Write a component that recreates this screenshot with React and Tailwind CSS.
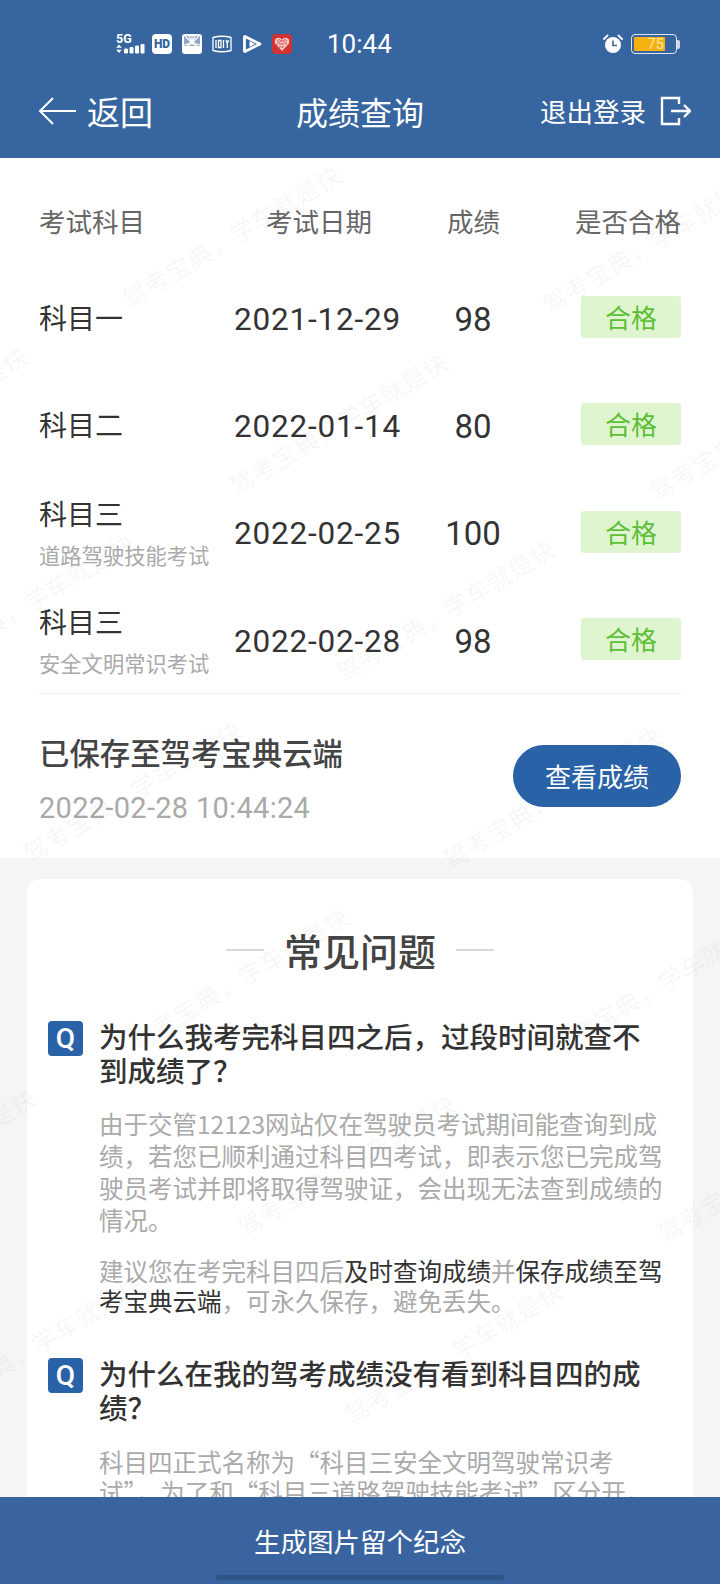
const CJK = '"Noto Sans CJK SC","Noto Sans",sans-serif';

function Watermarks() {
  const marks = [];
  for (let i = -2; i <= 2; i++) {
    for (let j = -2; j <= 8; j++) {
      const x = 132 + i * 420 + j * 107;
      const y = 313 + i * 6 + j * 187 - 158;
      if (x > 740 || x < -260 || y < 0 || y > 1400) continue;
      marks.push([x, y]);
    }
  }
  return (
    <div className="absolute inset-0 z-10 pointer-events-none overflow-hidden">
      {marks.map(([x, y]) => (
        <span
          key={`${x}-${y}`}
          className="absolute whitespace-nowrap text-[24px] leading-[30px] tracking-[1px] text-black/[0.05] origin-bottom-left"
          style={{ left: x, top: y - 30, transform: 'rotate(-31deg)' }}
        >
          驾考宝典，学车就是快
        </span>
      ))}
    </div>
  );
}

function StatusBar() {
  return (
    <div className="h-[88px] flex items-start pt-[33px] pl-[116px] pr-[40px] text-white">
      <div className="w-[32px] h-[22px] mr-[4px] flex flex-col">
        <span className="block h-[11px] text-[12.500px] leading-[11px] font-bold" style={{ fontFamily: 'Roboto' }}>5G</span>
        <svg width="32" height="11" viewBox="0 11 32 11" fill="#fff" className="block">
          <path d="M3 11.500l2.800 3.200h-5.600zM3 20l2.800-3.200h-5.600z" />
          <rect x="8" y="15.500" width="4" height="5" rx="1.200" />
          <rect x="13.500" y="14" width="4" height="6.500" rx="1.200" />
          <rect x="19" y="12.500" width="4" height="8" rx="1.200" />
          <rect x="24.500" y="11" width="4" height="9.500" rx="1.200" />
        </svg>
      </div>
      <div className="w-[20px] h-[20px] rounded-[4px] bg-white flex items-center justify-center text-[12px] font-black text-[#36659f] mr-[10px] mt-[1px]" style={{ fontFamily: 'Roboto' }}>HD</div>
      <svg width="20" height="20" viewBox="0 0 20 20" className="mr-[10px] mt-[1px]">
        <rect width="20" height="20" rx="3" fill="#fff" />
        <path d="M2 2h16v10H2z" fill="#8fa8c8" />
        <path d="M10 9L3 2M10 9L7 2M10 9V2M10 9l3-7M10 9l7-7M10 9l-8 2M10 9l8 2M10 9l-5 3M10 9l5 3" stroke="#fff" strokeWidth="1.200" />
        <circle cx="10" cy="8" r="2.500" fill="#fff" />
      </svg>
      <svg width="20" height="20" viewBox="0 0 20 20" className="mr-[10px] mt-[1px]">
        <path d="M1 3.500Q10 1 19 3.500V16.500Q10 19 1 16.500Z" fill="none" stroke="#fff" strokeWidth="1.300" />
        <path d="M4 6v8M6.500 6.500h2.500v7H6.500zM11.500 6v8M14 6l1.300 3.500L16.600 6M15.300 9.500V14" fill="none" stroke="#fff" strokeWidth="1.300" />
      </svg>
      <svg width="20" height="20" viewBox="0 0 20 20" className="mr-[10px] mt-[1px]">
        <path d="M3 2.500L18 10 3 17.500" fill="none" stroke="#fff" strokeWidth="2.800" strokeLinejoin="round" strokeLinecap="round" />
        <path d="M2.500 3v14" stroke="#fff" strokeWidth="2.800" strokeLinecap="round" />
        <path d="M7.500 7L13 10 7.500 13Z" fill="#fff" />
      </svg>
      <svg width="20" height="20" viewBox="0 0 20 20" className="mt-[1px]">
        <rect width="20" height="20" rx="4" fill="#cf3333" />
        <path d="M10 17L3 9.500Q1.800 4 6.500 3.800 9 3.800 10 5.800 11 3.800 13.500 3.800 18.200 4 17 9.500Z" fill="#f6c9c9" />
        <path d="M5 7h10M4.500 10h11M7 13h6M7 5v6M10 6v9M13 5v6" stroke="#cf3333" strokeWidth="1" strokeDasharray="1.500 1.500" />
      </svg>
      <span className="ml-[35px] text-[26px] leading-[22px]" style={{ fontFamily: 'Roboto' }}>10:44</span>
      <svg width="20" height="20" viewBox="0 0 20 20" className="ml-auto mt-[1px]">
        <circle cx="10" cy="11" r="8" fill="#fff" />
        <path d="M10 6.500V11.500H14" fill="none" stroke="#36659f" strokeWidth="1.600" />
        <path d="M1 5l3.500-3.500M19 5l-3.500-3.500" stroke="#fff" strokeWidth="1.800" strokeLinecap="round" />
      </svg>
      <div className="ml-[8px] mt-[1px] flex items-center">
        <div className="w-[46px] h-[20px] rounded-[4px] border border-[#dfe6ee] p-[2px]">
          <div className="w-[31px] h-full bg-[#f6b10e] rounded-l-[1px] text-[15px] leading-[14px] text-right text-[#fbe7a8] pr-[1px]" style={{ fontFamily: 'Roboto' }}>75</div>
        </div>
        <div className="w-[3px] h-[9px] bg-[#cfd8e3] rounded-r-[2px]" />
      </div>
    </div>
  );
}

function NavBar() {
  return (
    <div className="h-[70px] flex items-center text-white pb-[24px]">
      <div className="flex items-center pl-[38px]">
        <svg width="39" height="30" viewBox="0 0 39 30" fill="none" stroke="#fff" strokeWidth="2">
          <path d="M38 15H2M15 2L2 15l13 13" />
        </svg>
        <span className="ml-[10px] text-[33px] leading-[40px]">返回</span>
      </div>
      <span className="ml-[143px] text-[32px] leading-[40px]">成绩查询</span>
      <div className="ml-auto flex items-center pr-[29px]">
        <span className="text-[26.500px] leading-[36px]">退出登录</span>
        <svg width="31" height="30" viewBox="0 0 31 30" fill="none" stroke="#fff" strokeWidth="2.400" className="ml-[14px]">
          <path d="M19 8V2H2v26h17v-6M11 15h18M24 9l6 6-6 6" />
        </svg>
      </div>
    </div>
  );
}

function Badge() {
  return (
    <div className="w-[100px] h-[42px] rounded-[3px] bg-[#dff5d0] text-[#5cbf35] text-[26px] leading-[42px] text-center justify-self-end">
      合格
    </div>
  );
}

const rows = [
  { name: '科目一', date: '2021-12-29', score: '98' },
  { name: '科目二', date: '2022-01-14', score: '80' },
  { name: '科目三', sub: '道路驾驶技能考试', date: '2022-02-25', score: '100' },
  { name: '科目三', sub: '安全文明常识考试', date: '2022-02-28', score: '98' },
];

function ScoreTable() {
  return (
    <div>
      <div className="grid grid-cols-[195px_205px_79px_1fr] h-[105.500px] pt-[20px] items-center text-[26.500px] text-[#666]">
        <span>考试科目</span>
        <span className="pl-[32px]">考试日期</span>
        <span className="ml-[8px] whitespace-nowrap">成绩</span>
        <span className="text-right whitespace-nowrap">是否合格</span>
      </div>
      {rows.map((r, i) => (
        <div key={i} className="grid grid-cols-[195px_205px_79px_1fr] h-[107.300px] items-center">
          <div className="flex flex-col">
            <span className="text-[28px] leading-[36px] text-[#333]">{r.name}</span>
            {r.sub && <span className="text-[21.300px] leading-[30px] mt-[9px] mb-[-2px] text-[#aaa] whitespace-nowrap">{r.sub}</span>}
          </div>
          <span className="text-[31.500px] tracking-[0.800px] leading-[36px] text-[#333] whitespace-nowrap mt-[5px]" style={{ fontFamily: 'Roboto' }}>{r.date}</span>
          <span className="w-[60px] text-center text-[33px] leading-[36px] text-[#333] mt-[5px] ml-[4px]" style={{ fontFamily: 'Roboto' }}>{r.score}</span>
          <Badge />
        </div>
      ))}
    </div>
  );
}

function Question({ children }) {
  return (
    <div className="flex">
      <div className="w-[35px] h-[35px] shrink-0 rounded-[4px] bg-[#2a62a8] text-white text-[28px] font-medium leading-[36px] text-center" style={{ fontFamily: 'Roboto' }}>Q</div>
      <p className="ml-[16px] text-[28.500px] leading-[33.500px] font-medium text-[#333] mt-[-2px] w-[560px]">{children}</p>
    </div>
  );
}

export default function App() {
  return (
    <div className="w-[720px] h-[1584px] flex flex-col overflow-hidden bg-[#f5f5f5]" style={{ fontFamily: CJK }}>
      <header className="h-[158px] shrink-0 bg-[#36659f]">
        <StatusBar />
        <NavBar />
      </header>

      <main className="relative flex-1 min-h-0 overflow-hidden">
        <Watermarks />
        <section className="bg-white px-[39px] h-[700px]">
          <ScoreTable />
          <div className="border-t border-[#f3f3f3] flex items-center justify-between h-[165px]">
            <div className="mt-[8px]">
              <div className="text-[30.400px] leading-[36px] font-medium text-[#444] whitespace-nowrap">已保存至驾考宝典云端</div>
              <div className="text-[29px] tracking-[0.300px] leading-[36px] text-[#aaa] mt-[20px]" style={{ fontFamily: 'Roboto' }}>2022-02-28 10:44:24</div>
            </div>
            <button className="w-[168px] h-[62px] rounded-full bg-[#2a62a8] text-white text-[26px] leading-[62px]">查看成绩</button>
          </div>
        </section>

        <section className="mx-[27px] mt-[21px] rounded-t-[14px] bg-white px-[21px] pt-[46px]">
          <div className="flex items-center justify-center gap-[20px] h-[50px]">
            <span className="w-[38px] h-[2px] bg-[#d8d8d8]" />
            <span className="text-[38px] leading-[50px] font-medium text-[#444]">常见问题</span>
            <span className="w-[38px] h-[2px] bg-[#d8d8d8]" />
          </div>
          <div className="mt-[46px]">
            <Question>为什么我考完科目四之后，过段时间就查不到成绩了？</Question>
            <div className="ml-[51px] mt-[22px] w-[570px] text-[24.500px] leading-[32px] text-[#aaa]">
              <p>由于交管12123网站仅在驾驶员考试期间能查询到成绩，若您已顺利通过科目四考试，即表示您已完成驾驶员考试并即将取得驾驶证，会出现无法查到成绩的情况。</p>
              <p className="mt-[20px] leading-[29.500px]">
                建议您在考完科目四后<span className="text-[#333]">及时查询成绩</span>并<span className="text-[#333]">保存成绩至驾考宝典云端</span>，可永久保存，避免丢失。
              </p>
            </div>
          </div>
          <div className="mt-[43px]">
            <Question>为什么在我的驾考成绩没有看到科目四的成绩？</Question>
            <p className="ml-[51px] mt-[24px] w-[570px] text-[24.500px] leading-[29.500px] text-[#aaa]">
              科目四正式名称为“科目三安全文明驾驶常识考试”，为了和“科目三道路驾驶技能考试”区分开，所以才有了科目四的叫法。
            </p>
          </div>
        </section>
      </main>

      <footer className="relative z-20 h-[87px] shrink-0 bg-[#3a64a0] flex flex-col items-center">
        <span className="mt-[26px] text-[26.500px] leading-[36px] text-white">生成图片留个纪念</span>
        <div className="mt-[16px] w-[288px] h-[5px] rounded-full bg-[#2f5488]" />
      </footer>
    </div>
  );
}
